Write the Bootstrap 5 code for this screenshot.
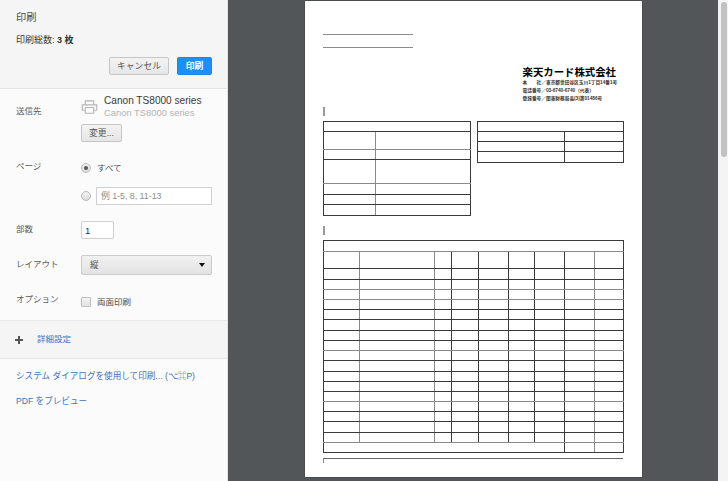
<!DOCTYPE html>
<html lang="ja">
<head>
<meta charset="UTF-8" />
<title>印刷</title>
<link href="https://cdn.jsdelivr.net/npm/bootstrap@5.3.3/dist/css/bootstrap.min.css" rel="stylesheet" />
<style>
  html, body { height: 481px; overflow: hidden; }
  body { font-family: "Liberation Sans", "Noto Sans CJK JP", sans-serif; font-size: 9px; color: #46484b; background: #fbfbfb; }

  .side { width: 228px; height: 481px; background: #fbfbfb; border-right: 1px solid #e4e4e4; flex: none; }
  .side-head { height: 89px; padding: 10px 15px 0 16px; background: #f5f5f5; border-bottom: 1px solid #e3e3e3; }
  .side-title { font-size: 10.2px; line-height: 16px; color: #4a4a4a; }
  .side-count { font-size: 9px; line-height: 14px; margin-top: 7px; font-weight: 700; color: #333; }
  .side-count span { font-weight: 400; }
  .head-btns { margin-top: 10px; }
  .pbtn { font-size: 8.8px; line-height: 14px; padding: 0; border-radius: 2px; color: #555; background: linear-gradient(#f3f3f3, #e6e6e6); border: 1px solid #c6c6c6; }
  .pbtn-cancel { width: 60px; height: 18px; }
  .pbtn-go { width: 35px; height: 18px; color: #fff; font-weight: 700; background: #1e8ff5; border-color: #1a86e6; }
  .pbtn-change { width: 41px; height: 18px; margin-top: 6px; }

  .opt-row { padding-left: 16px; display: flex; }
  .opt-label { width: 65px; flex: none; font-size: 8.5px; line-height: 14px; color: #5c5c5c; }
  .opt-label.lift-s { padding-bottom: 2px; }
  .opt-label.lift-m { padding-bottom: 6px; }
  .dest-row { margin-top: 6px; height: 56px; }
  .dest-label { padding-top: 9px; }
  .dest-icon { width: 23px; flex: none; padding-top: 5px; }
  .dest-name { font-size: 10.1px; line-height: 12px; color: #3a3a3a; }
  .dest-sub { font-size: 9.4px; line-height: 11px; color: #b4b4b4; }

  .page-row { margin-top: 8px; }
  .page-line { height: 14px; margin-top: 2px; }
  .fake-radio { width: 10px; height: 10px; border-radius: 50%; border: 1px solid #b8b8b8; background: linear-gradient(#f2f2f2, #dcdcdc); flex: none; }
  .fake-radio.on { padding: 2px; }
  .fake-radio.on i { display: block; width: 4px; height: 4px; border-radius: 50%; background: #555; }
  .fake-check { width: 10px; height: 10px; border: 1px solid #c0c0c0; border-radius: 1px; background: linear-gradient(#f4f4f4, #e2e2e2); flex: none; }
  .opt-text { font-size: 8.5px; line-height: 14px; color: #4a4a4a; margin-left: 6px; }
  .range-input { width: 116px; height: 18px; margin-left: 5px; padding: 0 4px; font-size: 8.8px; border: 1px solid #d0d0d0; border-radius: 0; background: #fff; }
  .range-input::placeholder { color: #8c8c8c; opacity: 1; }
  .copies-input { width: 33px; height: 18px; padding: 0 3px; font-size: 9.5px; color: #333; border: 1px solid #cfcfcf; border-radius: 2px; }
  .layout-btn { width: 131px; height: 20px; padding: 0 6px 0 8px; font-size: 8.6px; color: #555; background: linear-gradient(#f1f1f1, #e3e3e3); border: 1px solid #cbcbcb; border-radius: 2px; }
  .layout-btn::after { color: #111; border-top-width: 4px; border-left-width: 3.5px; border-right-width: 3.5px; }
  .option-row { height: 14px; margin-top: 20px; }

  .more-row { margin-top: 11px; height: 39px; padding-left: 15px; background: #f5f5f5; border-top: 1px solid #e8e8e8; border-bottom: 1px solid #e8e8e8; font-size: 8.5px; }
  .more-row a { margin-left: 14px; }
  .side a { color: #3f70c4; text-decoration: none; }
  .link-line { padding-left: 16px; margin-top: 11px; font-size: 8.6px; line-height: 14px; white-space: nowrap; }
  .more-row + .link-line { margin-top: 10px; }

  .preview { flex: 1 1 auto; background: #525659; padding-top: 1px; height: 481px; overflow: hidden; }
  .sheet { width: 337px; height: 476px; background: #fff; padding: 33px 19px 0 18px; flex: none; box-shadow: 0 0 1px #222; }
  .blank-line { width: 90px; height: 13px; border-top: 1px solid #8b8b8b; }
  .issuer { margin: 7px 0 0 200px; color: #111; white-space: nowrap; height: 36px; }
  .issuer-name { font-size: 10.4px; line-height: 12px; font-weight: 700; color: #000; }
  .issuer-sub { font-size: 4.7px; line-height: 8px; font-weight: 700; color: #333; }
  .tick { width: 2px; height: 9px; background: #999; }
  .tick-a { margin-top: 4px; }
  .tick-b { margin-top: 10px; }

  .doc-table { table-layout: fixed; flex: none; }
  .doc-table td { padding: 0; border: 1px solid #3a3a3a; }
  .doc-table tr.soft td { border-bottom-color: #8a8a8a; }
  .doc-table td.soft-col { border-right-color: #8a8a8a; }
  .tbl-tops { margin-top: 5px; gap: 6px; }
  .tbl-big { margin-top: 5px; }
  .tail { margin-top: 5px; height: 5px; border-top: 1px solid #666; border-left: 1px solid #888; }

  .scroll-strip { width: 10px; flex: none; height: 481px; background: #f4f4f4; padding: 2px 1px 0 3px; }
  .scroll-thumb { height: 155px; background: #c2c2c2; border-radius: 3px; }
</style>
</head>
<body>
<div class="d-flex">
  <div class="side">
    <div class="side-head">
      <div class="side-title">印刷</div>
      <div class="side-count"><span>印刷総数:</span> 3 枚</div>
      <div class="head-btns d-flex justify-content-end gap-2">
        <button type="button" class="btn pbtn pbtn-cancel">キャンセル</button>
        <button type="button" class="btn pbtn pbtn-go">印刷</button>
      </div>
    </div>

    <div class="opt-row dest-row">
      <div class="opt-label dest-label">送信先</div>
      <div>
        <div class="d-flex">
          <div class="dest-icon">
            <svg class="d-block" width="17" height="14" viewBox="0 0 18 15" fill="none" stroke="#b5b5b5" stroke-width="1.2">
              <path d="M4.5 5V1h9v4" />
              <path d="M4 11H1.2V5.2h15.6V11H14" />
              <path d="M4.5 8h9v6.2h-9z" />
            </svg>
          </div>
          <div>
            <div class="dest-name">Canon TS8000 series</div>
            <div class="dest-sub">Canon TS8000 series</div>
          </div>
        </div>
        <button type="button" class="btn pbtn pbtn-change d-block">変更...</button>
      </div>
    </div>

    <div class="opt-row page-row">
      <div class="opt-label">ページ</div>
      <div>
        <div class="d-flex align-items-center page-line">
          <span class="fake-radio on"><i></i></span>
          <span class="opt-text">すべて</span>
        </div>
        <div class="d-flex align-items-center mt-2 pt-1">
          <span class="fake-radio"></span>
          <input class="form-control range-input" type="text" placeholder="例 1-5, 8, 11-13" />
        </div>
      </div>
    </div>

    <div class="opt-row align-items-center mt-3">
      <div class="opt-label lift-s">部数</div>
      <input class="form-control copies-input" type="text" value="1" />
    </div>

    <div class="opt-row align-items-center mt-3">
      <div class="opt-label lift-s">レイアウト</div>
      <button type="button" class="btn dropdown-toggle layout-btn d-flex align-items-center justify-content-between">縦</button>
    </div>

    <div class="opt-row option-row align-items-center">
      <div class="opt-label lift-m">オプション</div>
      <span class="fake-check"></span>
      <span class="opt-text">両面印刷</span>
    </div>

    <div class="more-row d-flex align-items-center">
      <svg width="8" height="8" viewBox="0 0 8 8"><path d="M3 0h2v3h3v2H5v3H3V5H0V3h3z" fill="#555" /></svg>
      <a href="#">詳細設定</a>
    </div>

    <div class="link-line"><a href="#">システム ダイアログを使用して印刷... (⌥⌘P)</a></div>
    <div class="link-line"><a href="#">PDF をプレビュー</a></div>
  </div>

  <div class="preview d-flex justify-content-center">
    <div class="sheet">
      <div class="blank-line"></div>
      <div class="blank-line"></div>
      <div class="issuer">
        <div class="issuer-name">楽天カード株式会社</div>
        <div class="issuer-sub">本　　社／東京都世田谷区玉川1丁目14番1号</div>
        <div class="issuer-sub">電話番号／03-6740-6740（代表）</div>
        <div class="issuer-sub">登録番号／関東財務局長(3)第01486号</div>
      </div>
      <div class="tick tick-a"></div>
      <div class="tbl-tops d-flex align-items-start">
        <table class="doc-table" id="tblLeft"></table>
        <table class="doc-table" id="tblRight"></table>
      </div>
      <div class="tick tick-b"></div>
      <table class="doc-table tbl-big" id="tblBig"></table>
      <div class="tail"></div>
    </div>
  </div>

  <div class="scroll-strip"><div class="scroll-thumb"></div></div>
</div>

<script src="https://cdn.jsdelivr.net/npm/bootstrap@5.3.3/dist/js/bootstrap.bundle.min.js"></script>
<script>
  // 明細の罫線は行の高さと列幅のデータから作る
  function buildTable(id, cols, rows, softCols) {
    const total = cols.reduce((a, b) => a + b, 0);
    let html = "";
    rows.forEach((r) => {
      const cls = r.soft ? ' class="soft"' : "";
      html += `<tr${cls} style="height:${r.h}px">`;
      if (r.span === "all") {
        html += `<td colspan="${cols.length}"></td>`;
      } else if (r.span) {
        html += `<td colspan="${r.span}"></td>`;
        cols.slice(r.span).forEach((w, i) => {
          const c = softCols.includes(i + r.span) ? ' class="soft-col"' : "";
          html += `<td${c}></td>`;
        });
      } else {
        cols.forEach((w, i) => {
          const c = softCols.includes(i) ? ' class="soft-col"' : "";
          html += `<td${c}></td>`;
        });
      }
      html += "</tr>";
    });
    const colgroup = "<colgroup>" + cols.map((w) => `<col style="width:${w}px">`).join("") + "</colgroup>";
    const el = document.getElementById(id);
    el.innerHTML = colgroup + html;
    el.style.width = total + 1 + "px";
  }

  buildTable("tblLeft", [52, 95], [
    { h: 10, span: "all" }, { h: 18, soft: true }, { h: 10 }, { h: 24, soft: true },
    { h: 11 }, { h: 10 }, { h: 11 },
  ], [0]);

  buildTable("tblRight", [87, 59], [
    { h: 10, span: "all" }, { h: 10 }, { h: 10 }, { h: 11 },
  ], []);

  const bigRows = [{ h: 11, span: "all", soft: true }, { h: 17 }];
  [11, 10, 10, 10, 10, 11, 10, 10, 10, 11, 10, 10, 10, 10, 10, 11, 10].forEach((h, i) => {
    bigRows.push({ h: h, soft: [1, 2, 7, 12, 16].includes(i) });
  });
  bigRows.push({ h: 10, span: 7 });
  buildTable("tblBig", [36, 75, 17, 27, 30, 26, 30, 30, 29], bigRows, [0, 1, 7]);
</script>
</body>
</html>
